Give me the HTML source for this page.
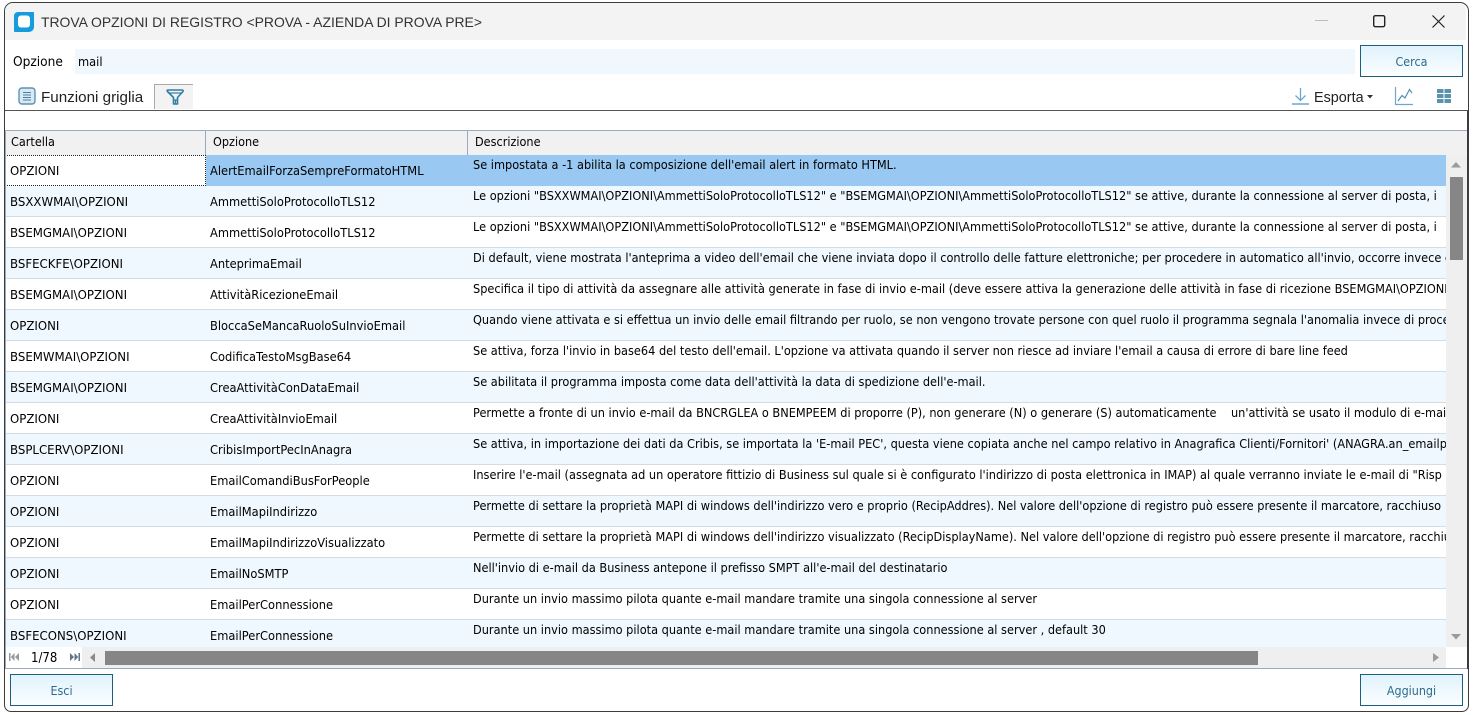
<!DOCTYPE html>
<html lang="it"><head><meta charset="utf-8"><title>Trova opzioni di registro</title>
<style>
html,body{margin:0;padding:0;background:#fff;width:1473px;height:715px;overflow:hidden}
body{position:relative;font-family:"DejaVu Sans","Liberation Sans",sans-serif;color:#111}
div,span,svg{position:absolute}
.win{left:4px;top:2px;width:1463px;height:708px;border:1px solid #3c3c3c;border-radius:9px 9px 7px 7px;background:#fff;overflow:hidden}
.seg{font-family:"Liberation Sans",sans-serif;white-space:nowrap;color:#222}
.t{white-space:nowrap;font-size:12px;line-height:15px;transform-origin:0 0;transform:scaleX(.955);color:#000}
.h{transform:scaleX(.94)}
.btn{width:101px;height:30px;border:1px solid #1c5f7e;color:#2c6b8c;background:linear-gradient(#e0f2fc,#fbfeff);text-align:center}
.btn span{left:0;width:100%;top:9px;font-size:12px;line-height:15px;transform:scaleX(.93)}
.r{left:5px;width:1441px;height:30px;border-bottom:1px solid #d3dbe3;background:#fff}
.r.a{background:#eff8fe}
.c1,.c2{top:9px}
.c1{left:5px;transform:scaleX(.98)}.c2{left:205px}
.cl{left:463px;top:0;width:978px;height:30px;overflow:hidden}
.c3{left:5px;top:3px;transform:scaleX(.946)}
</style></head><body>
<div class="win"></div>
<div style="left:5px;top:3px;width:1461px;height:37px;background:#f3f3f3;border-radius:8px 8px 0 0"></div>

<svg style="left:13px;top:11px" width="22" height="22" viewBox="0 0 22 22"><path d="M5 1H20a1 1 0 0 1 1 1V16a5 5 0 0 1-5 5H2a1 1 0 0 1-1-1V5a4 4 0 0 1 4-4z" fill="#169bdc"/><rect x="5" y="4.5" width="12" height="12" rx="3" fill="#fff"/></svg>
<span class="seg" style="left:41px;top:13px;font-size:13.93px;line-height:18px;color:#333">TROVA OPZIONI DI REGISTRO &lt;PROVA - AZIENDA DI PROVA PRE&gt;</span>

<div style="left:1315px;top:20px;width:13px;height:1px;background:#bcbcbc"></div>
<svg style="left:1372px;top:14px" width="15" height="15"><rect x="1.7" y="1.7" width="11" height="11" rx="1.6" fill="none" stroke="#222" stroke-width="1.4"/></svg>
<svg style="left:1431px;top:14px" width="15" height="15"><path d="M1.5 1.5L13.5 13.5M13.5 1.5L1.5 13.5" stroke="#222" stroke-width="1.2" fill="none"/></svg>

<span class="t" style="left:13px;top:54px;font-size:13px;line-height:17px;transform:scaleX(.94)">Opzione</span>
<div style="left:75px;top:49px;width:1280px;height:25px;background:#f0f8fe"></div>
<span class="t" style="left:78px;top:55px">mail</span>
<div class="btn" style="left:1360px;top:45px"><span>Cerca</span></div>

<svg style="left:18px;top:87px" width="18" height="18"><rect x="1" y="1" width="16" height="16" rx="3" fill="#d8e9f3" stroke="#5b93b4" stroke-width="1.4"/><path d="M5 5.5H13M5 8H13M5 10.5H13M5 13H13" stroke="#4f7f9c" stroke-width="1"/></svg>
<span class="seg" style="left:41px;top:89px;font-size:15.2px;line-height:18px">Funzioni griglia</span>
<div style="left:154px;top:84px;width:38px;height:24px;border-top:1px solid #aaa;border-left:1px solid #aaa;background:#f3f3f3"></div>
<svg style="left:165px;top:87px" width="20" height="20"><path d="M3 3H17Q18.5 3 18 4.5L12.5 10.5V17H8.5V10.5L2.5 4.5Q1.5 3 3 3Z" fill="none" stroke="#2f7ea8" stroke-width="1.6" stroke-linejoin="round"/><path d="M3.5 6H16.5" stroke="#2f7ea8" stroke-width="1.2"/><path d="M9 13H12M10.5 13V17" stroke="#2f7ea8" stroke-width="1.2"/></svg>

<svg style="left:1291px;top:87px" width="19" height="19"><path d="M9.5 1V13M4.5 8.5L9.5 13.5L14.5 8.5" fill="none" stroke="#6aa8d0" stroke-width="1.3"/><path d="M1 17H18" stroke="#6aa8d0" stroke-width="1.5"/></svg>
<span class="seg" style="left:1314px;top:89px;font-size:14.4px;line-height:18px">Esporta</span>
<svg style="left:1367px;top:95px" width="6" height="4"><path d="M0 0H6L3 3.5Z" fill="#333"/></svg>
<svg style="left:1394px;top:86px" width="20" height="20"><path d="M1.5 1V18.5H19" fill="none" stroke="#6fa6c9" stroke-width="1.2"/><path d="M4 15L8 9.5L11 12L15.5 3.5L18 7" fill="none" stroke="#4f8fb6" stroke-width="1.2"/></svg>
<svg style="left:1437px;top:88px" width="15" height="15" fill="#5a93b0"><rect x="0" y="1" width="6.5" height="4"/><rect x="7.5" y="1" width="6.5" height="4"/><rect x="0" y="6" width="6.5" height="4"/><rect x="7.5" y="6" width="6.5" height="4"/><rect x="0" y="11" width="6.5" height="4"/><rect x="7.5" y="11" width="6.5" height="4"/></svg>

<div style="left:5px;top:110px;width:1463px;height:1px;background:#555"></div>

<!-- griglia -->
<div style="left:5px;top:130px;width:1462px;height:24px;background:#f1f1f1;border-top:1px solid #9aa9bb;border-bottom:1px solid #9aa9bb"></div>
<div style="left:205px;top:131px;width:1px;height:24px;background:#9aa9bb"></div>
<div style="left:467px;top:131px;width:1px;height:24px;background:#9aa9bb"></div>
<span class="t h" style="left:11px;top:135px">Cartella</span>
<span class="t h" style="left:213px;top:135px">Opzione</span>
<span class="t h" style="left:475px;top:135px">Descrizione</span>

<div class="r" style="top:155px;background:#99c9f2;border-bottom-color:#99c9f2"><div style="left:0;top:0;width:199px;height:29px;background:#fff;border:1px dotted #222"></div><span class="t c1">OPZIONI</span><span class="t c2">AlertEmailForzaSempreFormatoHTML</span><div class="cl"><span class="t c3">Se impostata a -1 abilita la composizione dell'email alert in formato HTML.</span></div></div>
<div class="r a" style="top:186px"><span class="t c1">BSXXWMAI\OPZIONI</span><span class="t c2">AmmettiSoloProtocolloTLS12</span><div class="cl"><span class="t c3">Le opzioni "BSXXWMAI\OPZIONI\AmmettiSoloProtocolloTLS12" e "BSEMGMAI\OPZIONI\AmmettiSoloProtocolloTLS12" se attive, durante la connessione al server di posta, i</span></div></div>
<div class="r" style="top:217px"><span class="t c1">BSEMGMAI\OPZIONI</span><span class="t c2">AmmettiSoloProtocolloTLS12</span><div class="cl"><span class="t c3">Le opzioni "BSXXWMAI\OPZIONI\AmmettiSoloProtocolloTLS12" e "BSEMGMAI\OPZIONI\AmmettiSoloProtocolloTLS12" se attive, durante la connessione al server di posta, i</span></div></div>
<div class="r a" style="top:248px"><span class="t c1">BSFECKFE\OPZIONI</span><span class="t c2">AnteprimaEmail</span><div class="cl"><span class="t c3">Di default, viene mostrata l'anteprima a video dell'email che viene inviata dopo il controllo delle fatture elettroniche; per procedere in automatico all'invio, occorre invece c</span></div></div>
<div class="r" style="top:279px"><span class="t c1">BSEMGMAI\OPZIONI</span><span class="t c2">AttivitàRicezioneEmail</span><div class="cl"><span class="t c3">Specifica il tipo di attività da assegnare alle attività generate in fase di invio e-mail (deve essere attiva la generazione delle attività in fase di ricezione BSEMGMAI\OPZIONI</span></div></div>
<div class="r a" style="top:310px"><span class="t c1">OPZIONI</span><span class="t c2">BloccaSeMancaRuoloSuInvioEmail</span><div class="cl"><span class="t c3">Quando viene attivata e si effettua un invio delle email filtrando per ruolo, se non vengono trovate persone con quel ruolo il programma segnala l'anomalia invece di procedere</span></div></div>
<div class="r" style="top:341px"><span class="t c1">BSEMWMAI\OPZIONI</span><span class="t c2">CodificaTestoMsgBase64</span><div class="cl"><span class="t c3">Se attiva, forza l'invio in base64 del testo dell'email. L'opzione va attivata quando il server non riesce ad inviare l'email a causa di errore di bare line feed</span></div></div>
<div class="r a" style="top:372px"><span class="t c1">BSEMGMAI\OPZIONI</span><span class="t c2">CreaAttivitàConDataEmail</span><div class="cl"><span class="t c3">Se abilitata il programma imposta come data dell'attività la data di spedizione dell'e-mail.</span></div></div>
<div class="r" style="top:403px"><span class="t c1">OPZIONI</span><span class="t c2">CreaAttivitàInvioEmail</span><div class="cl"><span class="t c3" style="white-space:pre">Permette a fronte di un invio e-mail da BNCRGLEA o BNEMPEEM di proporre (P), non generare (N) o generare (S) automaticamente    un'attività se usato il modulo di e-mail</span></div></div>
<div class="r a" style="top:434px"><span class="t c1">BSPLCERV\OPZIONI</span><span class="t c2">CribisImportPecInAnagra</span><div class="cl"><span class="t c3">Se attiva, in importazione dei dati da Cribis, se importata la 'E-mail PEC', questa viene copiata anche nel campo relativo in Anagrafica Clienti/Fornitori' (ANAGRA.an_emailp</span></div></div>
<div class="r" style="top:465px"><span class="t c1">OPZIONI</span><span class="t c2">EmailComandiBusForPeople</span><div class="cl"><span class="t c3">Inserire l'e-mail (assegnata ad un operatore fittizio di Business sul quale si è configurato l'indirizzo di posta elettronica in IMAP) al quale verranno inviate le e-mail di "Risp</span></div></div>
<div class="r a" style="top:496px"><span class="t c1">OPZIONI</span><span class="t c2">EmailMapiIndirizzo</span><div class="cl"><span class="t c3">Permette di settare la proprietà MAPI di windows dell'indirizzo vero e proprio (RecipAddres). Nel valore dell'opzione di registro può essere presente il marcatore, racchiuso</span></div></div>
<div class="r" style="top:527px"><span class="t c1">OPZIONI</span><span class="t c2">EmailMapiIndirizzoVisualizzato</span><div class="cl"><span class="t c3">Permette di settare la proprietà MAPI di windows dell'indirizzo visualizzato (RecipDisplayName). Nel valore dell'opzione di registro può essere presente il marcatore, racchiuso</span></div></div>
<div class="r a" style="top:558px"><span class="t c1">OPZIONI</span><span class="t c2">EmailNoSMTP</span><div class="cl"><span class="t c3">Nell'invio di e-mail da Business antepone il prefisso SMPT all'e-mail del destinatario</span></div></div>
<div class="r" style="top:589px"><span class="t c1">OPZIONI</span><span class="t c2">EmailPerConnessione</span><div class="cl"><span class="t c3">Durante un invio massimo pilota quante e-mail mandare tramite una singola connessione al server</span></div></div>
<div class="r a" style="top:620px;height:27px;border-bottom:0"><span class="t c1">BSFECONS\OPZIONI</span><span class="t c2">EmailPerConnessione</span><div class="cl"><span class="t c3">Durante un invio massimo pilota quante e-mail mandare tramite una singola connessione al server , default 30</span></div></div>

<!-- scrollbar verticale -->
<div style="left:1446px;top:155px;width:21px;height:492px;background:#efefef"></div>
<div style="left:1450px;top:177px;width:13px;height:83px;background:#868686"></div>
<svg style="left:1451px;top:162px" width="10" height="6"><path d="M0 5.5L5 0L10 5.5Z" fill="#9a9a9a"/></svg>
<svg style="left:1451px;top:634px" width="10" height="6"><path d="M0 0L5 5.5L10 0Z" fill="#9a9a9a"/></svg>

<!-- barra inferiore -->
<div style="left:5px;top:647px;width:77px;height:21px;background:#fff"></div>
<div style="left:82px;top:647px;width:1364px;height:21px;background:#efefef"></div>
<div style="left:105px;top:651px;width:1153px;height:14px;background:#868686"></div>
<svg style="left:9px;top:653px" width="10" height="8" fill="#8f9aa3"><rect x="0" y="0" width="1.5" height="8"/><path d="M5.5 0V8L1.8 4Z"/><path d="M10 0V8L6 4Z"/></svg>
<span class="t" style="left:31px;top:651px;font-size:13px;transform:scaleX(.9)">1/78</span>
<svg style="left:70px;top:653px" width="10" height="8" fill="#5f7688"><path d="M0 0V8L4 4Z"/><path d="M4.5 0V8L8.2 4Z"/><rect x="8.5" y="0" width="1.5" height="8"/></svg>
<svg style="left:90px;top:653px" width="5" height="9"><path d="M5 0V9L0 4.5Z" fill="#8a8a8a"/></svg>
<svg style="left:1433px;top:653px" width="6" height="9"><path d="M0 0V9L6 4.5Z" fill="#9a9a9a"/></svg>
<div style="left:5px;top:668px;width:1463px;height:1px;background:#9aa9bb"></div>
<div style="left:1467px;top:111px;width:1px;height:558px;background:#3c3c3c"></div>
<div style="left:5px;top:130px;width:1px;height:538px;background:#9aa9bb"></div>

<div class="btn" style="left:10px;top:674px"><span>Esci</span></div>
<div class="btn" style="left:1360px;top:674px"><span>Aggiungi</span></div>
</body></html>
